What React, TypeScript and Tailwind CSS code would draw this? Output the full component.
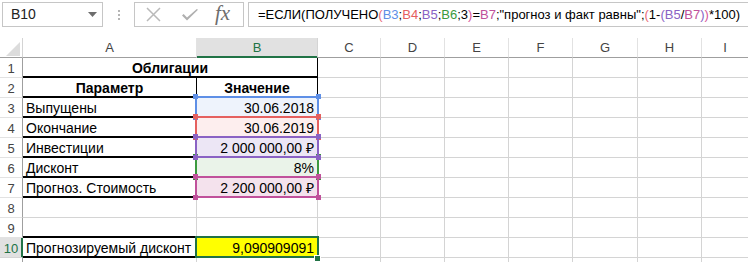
import React from "react";

const letters = ["A", "B", "C", "D", "E", "F", "G", "H", "I"];

type Cell = { text?: string; align?: "left" | "right" | "center"; bold?: boolean };

function Corners({ c }: { c: string }) {
  return (
    <>
      <div className={`absolute -left-[4px] -top-[4px] w-[5px] h-[5px] ${c}`} />
      <div className={`absolute -right-[4px] -top-[4px] w-[5px] h-[5px] ${c}`} />
      <div className={`absolute -left-[4px] -bottom-[4px] w-[5px] h-[5px] ${c}`} />
      <div className={`absolute -right-[4px] -bottom-[4px] w-[5px] h-[5px] ${c}`} />
    </>
  );
}

export default function App() {
  const rows: { n: number; a?: Cell; b?: Cell; bg?: string; merged?: Cell; hideNum?: boolean }[] = [
    { n: 1, merged: { text: "Облигации", align: "center", bold: true } },
    { n: 2, a: { text: "Параметр", align: "center", bold: true }, b: { text: "Значение", align: "center", bold: true } },
    { n: 3, a: { text: "Выпущены" }, b: { text: "30.06.2018", align: "right" }, bg: "bg-[#eef3fc]" },
    { n: 4, a: { text: "Окончание" }, b: { text: "30.06.2019", align: "right" }, bg: "bg-[#fdeeee]" },
    { n: 5, a: { text: "Инвестиции" }, b: { text: "2 000 000,00 ₽", align: "right" }, bg: "bg-[#ece6f5]" },
    { n: 6, a: { text: "Дисконт" }, b: { text: "8%", align: "right" }, bg: "bg-[#eaf3e9]" },
    { n: 7, a: { text: "Прогноз. Стоимость" }, b: { text: "2 200 000,00 ₽", align: "right" }, bg: "bg-[#f4e2ed]" },
    { n: 8 },
    { n: 9 },
    { n: 10, a: { text: "Прогнозируемый дисконт" }, b: { text: "9,090909091", align: "right" }, bg: "bg-[#ffff00]" },
    { n: 11, hideNum: true },
  ];

  const thickB = "border-b-black shadow-[inset_0_-1px_0_#000]";

  const alignCls = (c?: Cell) =>
    c?.align === "right" ? "justify-end pr-[3px]" : c?.align === "center" ? "justify-center" : "justify-start pl-[3px]";

  return (
    <div className="relative w-[748px] h-[262px] overflow-hidden bg-white text-black font-['Liberation_Sans',Arial,sans-serif]">
      {/* Formula bar */}
      <div className="flex items-start h-[38px] pt-[2px]">
        <div className="shrink-0 ml-[2px] w-[101px] h-[25px] border border-[#c6c6c6] flex items-center justify-between pl-[8px] pr-[5px] text-[14px] text-[#222]">
          <span>B10</span>
          <svg width="9" height="5" viewBox="0 0 9 5">
            <path d="M0 0 L9 0 L4.5 5 Z" fill="#6d6d6d" />
          </svg>
        </div>
        <div className="shrink-0 w-[31px] h-[25px] flex flex-col items-center justify-center gap-[2px]">
          <div className="w-[2px] h-[2px] bg-[#b5b5b5]" />
          <div className="w-[2px] h-[2px] bg-[#b5b5b5]" />
          <div className="w-[2px] h-[2px] bg-[#b5b5b5]" />
        </div>
        <div className="shrink-0 w-[110px] h-[25px] border border-[#c6c6c6] flex items-center pl-[11px]">
          <svg width="15" height="15" viewBox="0 0 15 15">
            <path d="M1 1 L14 14 M14 1 L1 14" stroke="#b9b9b9" strokeWidth="1.5" />
          </svg>
          <svg className="ml-[20px]" width="18" height="14" viewBox="0 0 18 14">
            <path d="M1 7.5 L6 12.5 L17 1.8 L15.8 1 L6 9.6 L2.6 6 Z" fill="#b0b0b0" />
          </svg>
          <span className="ml-[16px] text-[21px] leading-none text-[#6d6d6d] italic -mt-[2px] font-['Liberation_Serif','Times_New_Roman',serif]">
            fx
          </span>
        </div>
        <div className="ml-[4px] flex-1 min-w-0 overflow-hidden h-[25px] border border-[#c6c6c6] border-r-0 flex items-center pl-[9px] text-[13px] whitespace-nowrap">
          <span>=ЕСЛИ(ПОЛУЧЕНО</span>
          <span className="text-[#e96a78]">(</span>
          <span className="text-[#5e8fe6]">B3</span>
          <span>;</span>
          <span className="text-[#e5605f]">B4</span>
          <span>;</span>
          <span className="text-[#8a62c4]">B5</span>
          <span>;</span>
          <span className="text-[#3b9a3e]">B6</span>
          <span>;3</span>
          <span className="text-[#d5559a]">)</span>
          <span>=</span>
          <span className="text-[#c0519b]">B7</span>
          <span>;"прогноз и факт равны";</span>
          <span className="text-[#e96a78]">(</span>
          <span>1-</span>
          <span className="text-[#8a62c4]">(</span>
          <span className="text-[#8a62c4]">B5</span>
          <span>/</span>
          <span className="text-[#c0519b]">B7</span>
          <span className="text-[#8a62c4]">)</span>
          <span className="text-[#d5559a]">)</span>
          <span>*100)</span>
        </div>
      </div>

      {/* Grid */}
      <div className="relative grid grid-cols-[23px_174px_121px_63px_64px_64px_64px_65px_64px_1fr] auto-rows-[20px] text-[14px]">
        {/* header row */}
        <div className="relative border-r border-b border-r-[#d4d4d4] border-b-[#9f9f9f]">
          <svg className="absolute right-[2px] bottom-[1px]" width="14" height="14" viewBox="0 0 14 14">
            <path d="M14 0 L14 14 L0 14 Z" fill="#dcdcdc" />
          </svg>
        </div>
        {letters.map((l) => (
          <div
            key={l}
            className={
              l === "B"
                ? "flex items-center justify-center border-r border-r-[#d4d4d4] bg-[#e1e1e1] text-[#217346] shadow-[inset_0_-1px_0_#217346] border-b border-b-[#217346] text-[13px]"
                : l === "I"
                ? "flex items-center justify-center border-b border-b-[#9f9f9f] text-[#444] text-[13px]"
                : "flex items-center justify-center border-r border-r-[#e2e2e2] border-b border-b-[#9f9f9f] text-[#444] text-[13px]"
            }
          >
            {l}
          </div>
        ))}

        {rows.map((r) => {
          const sel = r.n === 10;
          const cells: React.ReactNode[] = [];
          cells.push(
            <div
              key="h"
              className={
                sel
                  ? "flex items-center justify-center pt-[2px] bg-[#e1e1e1] text-[#217346] border-b border-b-[#d4d4d4] border-r border-r-[#217346] shadow-[inset_-1px_0_0_#217346] text-[13px]"
                  : "flex items-center justify-center pt-[2px] border-r border-r-[#9f9f9f] border-b border-b-[#e2e2e2] text-[#444] text-[13px]"
              }
            >
              {r.hideNum ? "" : r.n}
            </div>
          );
          if (r.merged) {
            cells.push(
              <div
                key="m"
                className={`col-span-2 flex items-end leading-[14px] pb-[2px] font-bold justify-center border-r border-r-black border-b ${thickB}`}
              >
                {r.merged.text}
              </div>
            );
          } else {
            const aBorder =
              (r.n >= 2 && r.n <= 7) || r.n === 10
                ? `border-r border-r-black border-b ${thickB}`
                : r.n === 9
                ? `border-r border-r-[#d4d4d4] border-b ${thickB}`
                : "border-r border-b border-[#d4d4d4]";
            cells.push(
              <div
                key="a"
                className={`flex items-end leading-[14px] pb-[2px] whitespace-nowrap ${alignCls(r.a)} ${r.a?.bold ? "font-bold" : ""} ${aBorder}`}
              >
                {r.a?.text}
              </div>
            );
            const bBorder = r.n === 2 ? "border-r border-r-black border-b border-b-[#d4d4d4]" : "border-r border-b border-[#d4d4d4]";
            cells.push(
              <div
                key="b"
                className={`flex items-end leading-[14px] pb-[2px] whitespace-nowrap ${alignCls(r.b)} ${r.b?.bold ? "font-bold" : ""} ${bBorder} ${r.bg ?? ""}`}
              >
                {r.b?.text}
              </div>
            );
          }
          for (let i = 2; i < 8; i++) {
            cells.push(<div key={"c" + i} className="border-r border-b border-[#d4d4d4]" />);
          }
          cells.push(<div key="last" className="border-b border-[#d4d4d4]" />);
          return <React.Fragment key={r.n}>{cells}</React.Fragment>;
        })}

        {/* Reference range highlights (overlay) */}
        <div className="absolute left-[195px] top-[118px] w-[124px] h-[22px] border-2 border-[#3b9a3e] pointer-events-none">
          <Corners c="bg-[#3b9a3e]" />
        </div>
        <div className="absolute left-[195px] top-[58px] w-[124px] h-[22px] border-2 border-[#5e8fe6] pointer-events-none">
          <Corners c="bg-[#5e8fe6]" />
        </div>
        <div className="absolute left-[195px] top-[78px] w-[124px] h-[22px] border-2 border-[#e5605f] pointer-events-none">
          <Corners c="bg-[#e5605f]" />
        </div>
        <div className="absolute left-[195px] top-[98px] w-[124px] h-[22px] border-2 border-[#8a62c4] pointer-events-none">
          <Corners c="bg-[#8a62c4]" />
        </div>
        <div className="absolute left-[195px] top-[138px] w-[124px] h-[22px] border-2 border-[#c0519b] pointer-events-none">
          <Corners c="bg-[#c0519b]" />
        </div>

        {/* Selection B10 */}
        <div className="absolute left-[195px] top-[198px] w-[124px] h-[22px] border-2 border-[#217346] pointer-events-none" />
        <div className="absolute left-[314px] top-[217px] w-[7px] h-[7px] bg-[#217346] border border-white" />
      </div>
    </div>
  );
}
